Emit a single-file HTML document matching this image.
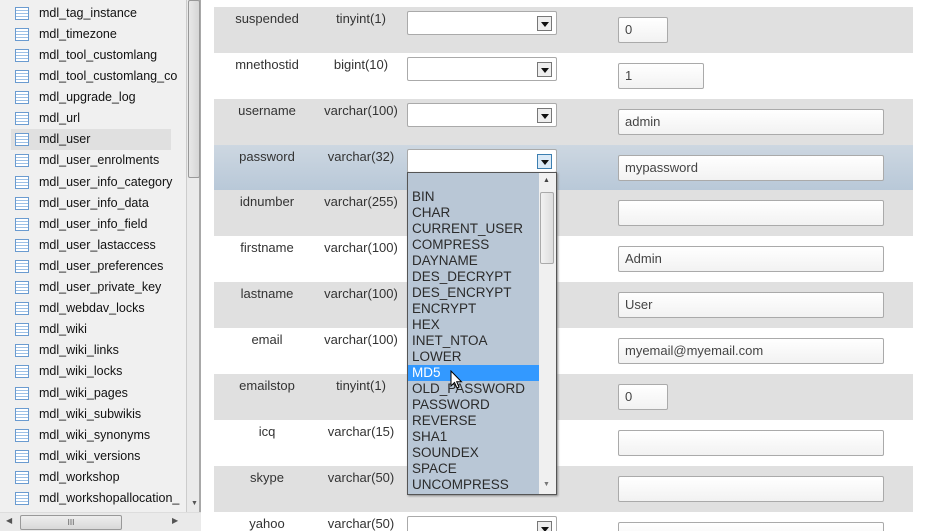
<!DOCTYPE html>
<html><head><meta charset="utf-8"><style>
*{box-sizing:border-box;margin:0;padding:0}
html,body{width:932px;height:531px;overflow:hidden}
body{background:#fff;font-family:"Liberation Sans",Arial,sans-serif;font-size:13px;color:#333;position:relative}
.side{position:absolute;left:0;top:0;width:186px;height:512px;background:#f0f0f0}
.it{position:absolute;left:0;width:186px;height:21px;line-height:21px;color:#111;font-size:12.5px;white-space:nowrap;overflow:hidden}
.it.sel{left:11px;width:160px;background:#e0e0e0}
.it .ic{position:absolute;left:15px;top:4px;width:14px;height:13px;border:1px solid #6a9bd0;background:repeating-linear-gradient(#fff 0 2px,#9cc0e6 2px 3px);}
.it.sel .ic{left:4px}
.it span{position:absolute;left:39px}
.it.sel span{left:28px}
.vs{position:absolute;left:186px;top:0;width:15px;height:512px;background:#eaeaea;border-left:1px solid #ccc;border-right:2px solid #a8a8a8}
.vs .th{position:absolute;left:1px;top:0;width:12px;height:178px;background:linear-gradient(90deg,#e8e8e8,#d6d6d6);border:1px solid #999;border-radius:2px}
.hs{position:absolute;left:0;top:512px;width:201px;height:19px;background:#eaeaea;border-top:1px solid #ddd}
.hs .th{position:absolute;left:20px;top:2px;width:102px;height:15px;background:linear-gradient(#eee,#d8d8d8);border:1px solid #999;border-radius:2px;font-size:8px;text-align:center;line-height:13px;color:#555}
.row{position:absolute;left:214px;width:699px;height:46px}
.g{background:#e0e0e0}
.h{background:linear-gradient(#cdd7e1,#b8c8d8)}
.nm{position:absolute;left:0;width:106px;text-align:center;top:4px;color:#333}
.ty{position:absolute;left:100px;width:94px;text-align:center;top:4px;color:#333}
.sl{position:absolute;left:193px;top:4px;width:150px;height:24px;background:#fff;border:1px solid #aaa;border-radius:2px}
.sl i{position:absolute;right:4px;top:4px;width:15px;height:15px;border:1px solid #777;background:#eee}
.sl i:after{content:"";position:absolute;left:3px;top:5px;border-left:4px solid transparent;border-right:4px solid transparent;border-top:5px solid #111}
.in{position:absolute;left:404px;top:10px;height:26px;background:linear-gradient(#fff,#f2f2f2);border:1px solid #aaa;border-radius:2px;padding-left:6px;line-height:24px;color:#444;font-size:13px}
.dd{position:absolute;left:407px;top:172px;width:150px;height:323px;background:#b9c7d6;border:1px solid #555;box-shadow:1px 1px 2px #888}
.dd .o{height:16px;line-height:16px;padding-left:4px;color:#2b2b2b;font-size:13.5px;width:131px}
.dd .s{background:#3399ff;color:#fff}
.dsb{position:absolute;right:0;top:0;width:17px;height:321px;background:#f0f0f0}
.dsb .th{position:absolute;left:1px;top:19px;width:14px;height:72px;border:1px solid #aaa;background:linear-gradient(90deg,#f2f2f2,#ddd);border-radius:2px}
</style></head><body>
<div class="side">
<div class="it" style="top:3px"><b class="ic"></b><span>mdl_tag_instance</span></div>
<div class="it" style="top:24px"><b class="ic"></b><span>mdl_timezone</span></div>
<div class="it" style="top:45px"><b class="ic"></b><span>mdl_tool_customlang</span></div>
<div class="it" style="top:66px"><b class="ic"></b><span>mdl_tool_customlang_co</span></div>
<div class="it" style="top:87px"><b class="ic"></b><span>mdl_upgrade_log</span></div>
<div class="it" style="top:108px"><b class="ic"></b><span>mdl_url</span></div>
<div class="it sel" style="top:129px"><b class="ic"></b><span>mdl_user</span></div>
<div class="it" style="top:150px"><b class="ic"></b><span>mdl_user_enrolments</span></div>
<div class="it" style="top:172px"><b class="ic"></b><span>mdl_user_info_category</span></div>
<div class="it" style="top:193px"><b class="ic"></b><span>mdl_user_info_data</span></div>
<div class="it" style="top:214px"><b class="ic"></b><span>mdl_user_info_field</span></div>
<div class="it" style="top:235px"><b class="ic"></b><span>mdl_user_lastaccess</span></div>
<div class="it" style="top:256px"><b class="ic"></b><span>mdl_user_preferences</span></div>
<div class="it" style="top:277px"><b class="ic"></b><span>mdl_user_private_key</span></div>
<div class="it" style="top:298px"><b class="ic"></b><span>mdl_webdav_locks</span></div>
<div class="it" style="top:319px"><b class="ic"></b><span>mdl_wiki</span></div>
<div class="it" style="top:340px"><b class="ic"></b><span>mdl_wiki_links</span></div>
<div class="it" style="top:361px"><b class="ic"></b><span>mdl_wiki_locks</span></div>
<div class="it" style="top:383px"><b class="ic"></b><span>mdl_wiki_pages</span></div>
<div class="it" style="top:404px"><b class="ic"></b><span>mdl_wiki_subwikis</span></div>
<div class="it" style="top:425px"><b class="ic"></b><span>mdl_wiki_synonyms</span></div>
<div class="it" style="top:446px"><b class="ic"></b><span>mdl_wiki_versions</span></div>
<div class="it" style="top:467px"><b class="ic"></b><span>mdl_workshop</span></div>
<div class="it" style="top:488px"><b class="ic"></b><span>mdl_workshopallocation_</span></div>
</div>
<div class="vs"><div class="th"></div><div style="position:absolute;left:4px;top:500px;font-size:7px;color:#555">▼</div></div>
<div class="hs"><span style="position:absolute;left:6px;top:3px;font-size:8px;color:#555">◀</span><div class="th">III</div><span style="position:absolute;left:172px;top:3px;font-size:8px;color:#555">▶</span></div>

<div class="row g" style="top:7px"><div class="nm">suspended</div><div class="ty">tinyint(1)</div><div class="sl"><i></i></div><div class="in" style="width:50px">0</div></div>
<div class="row" style="top:53px"><div class="nm">mnethostid</div><div class="ty">bigint(10)</div><div class="sl"><i></i></div><div class="in" style="width:86px">1</div></div>
<div class="row g" style="top:99px"><div class="nm">username</div><div class="ty">varchar(100)</div><div class="sl"><i></i></div><div class="in" style="width:266px">admin</div></div>
<div class="row h" style="top:145px"><div class="nm">password</div><div class="ty">varchar(32)</div><div class="sl"><i style="border-color:#3c7fb1;background:#dbeaf7"></i></div><div class="in" style="width:266px">mypassword</div></div>
<div class="row g" style="top:190px"><div class="nm">idnumber</div><div class="ty">varchar(255)</div><div class="sl"><i></i></div><div class="in" style="width:266px"></div></div>
<div class="row" style="top:236px"><div class="nm">firstname</div><div class="ty">varchar(100)</div><div class="sl"><i></i></div><div class="in" style="width:266px">Admin</div></div>
<div class="row g" style="top:282px"><div class="nm">lastname</div><div class="ty">varchar(100)</div><div class="sl"><i></i></div><div class="in" style="width:266px">User</div></div>
<div class="row" style="top:328px"><div class="nm">email</div><div class="ty">varchar(100)</div><div class="sl"><i></i></div><div class="in" style="width:266px">myemail@myemail.com</div></div>
<div class="row g" style="top:374px"><div class="nm">emailstop</div><div class="ty">tinyint(1)</div><div class="sl"><i></i></div><div class="in" style="width:50px">0</div></div>
<div class="row" style="top:420px"><div class="nm">icq</div><div class="ty">varchar(15)</div><div class="sl"><i></i></div><div class="in" style="width:266px"></div></div>
<div class="row g" style="top:466px"><div class="nm">skype</div><div class="ty">varchar(50)</div><div class="sl"><i></i></div><div class="in" style="width:266px"></div></div>
<div class="row" style="top:512px;height:19px"><div class="nm">yahoo</div><div class="ty">varchar(50)</div><div class="sl"><i></i></div><div class="in" style="width:266px"></div></div>

<div class="dd">
<div class="o"></div><div class="o">BIN</div><div class="o">CHAR</div><div class="o">CURRENT_USER</div><div class="o">COMPRESS</div><div class="o">DAYNAME</div><div class="o">DES_DECRYPT</div><div class="o">DES_ENCRYPT</div><div class="o">ENCRYPT</div><div class="o">HEX</div><div class="o">INET_NTOA</div><div class="o">LOWER</div><div class="o s">MD5</div><div class="o">OLD_PASSWORD</div><div class="o">PASSWORD</div><div class="o">REVERSE</div><div class="o">SHA1</div><div class="o">SOUNDEX</div><div class="o">SPACE</div><div class="o">UNCOMPRESS</div>
<div class="dsb"><span style="position:absolute;left:4px;top:4px;font-size:7px;color:#444">▲</span><div class="th"></div><span style="position:absolute;left:4px;top:308px;font-size:7px;color:#777">▼</span></div>
<svg style="position:absolute;left:42px;top:197px" width="14" height="20" viewBox="0 0 14 20"><path d="M1 1 L1 16 L4.5 12.5 L7 18 L9 17 L6.7 11.8 L11.5 11.8 Z" fill="#fff" stroke="#000" stroke-width="1"/></svg>
</div>
</body></html>
